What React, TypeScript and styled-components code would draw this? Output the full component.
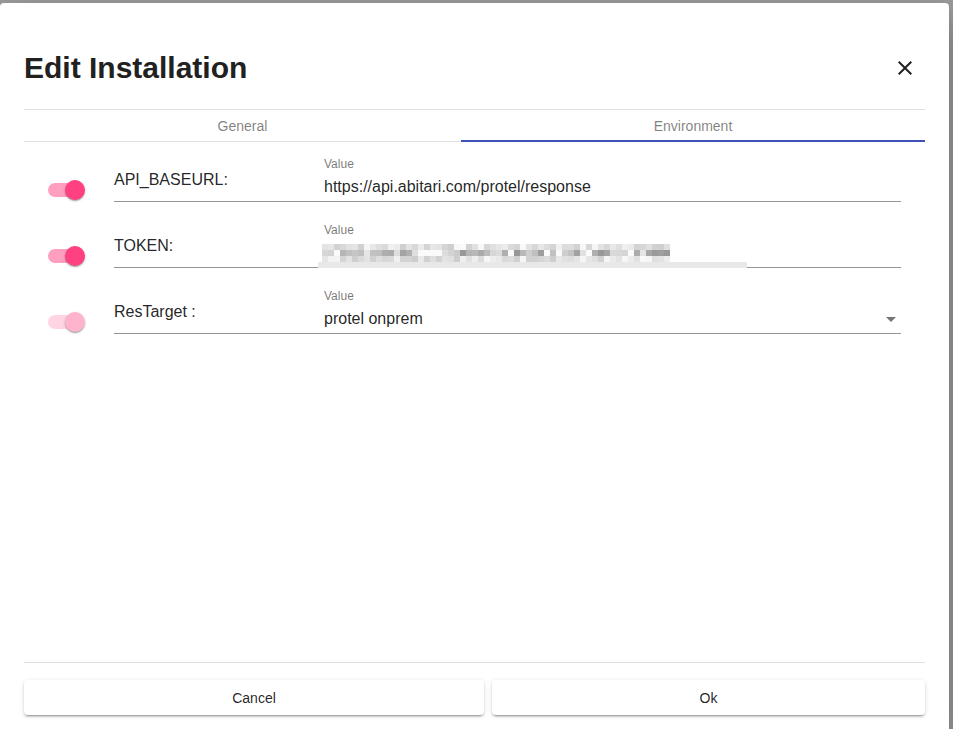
import React from "react";
import styled, { createGlobalStyle } from "styled-components";

const GlobalStyle = createGlobalStyle`
  html, body { margin: 0; padding: 0; }
  body {
    background: #9e9e9e;
    font-family: "Liberation Sans", Arial, sans-serif;
    color: rgba(0,0,0,0.87);
    overflow: hidden;
  }
`;

const Page = styled.div`
  width: 953px;
  height: 729px;
  overflow: hidden;
`;

const Dialog = styled.div`
  margin-top: 3px;
  width: 949px;
  height: 726px;
  background: #fff;
  border-radius: 4px 4px 0 0;
  box-shadow: 0 11px 15px -7px rgba(0,0,0,0.2), 0 24px 38px 3px rgba(0,0,0,0.14), 0 9px 46px 8px rgba(0,0,0,0.12);
  display: flex;
  flex-direction: column;
`;

const Header = styled.div`
  display: flex;
  align-items: center;
  justify-content: space-between;
  padding: 47px 24px 23px 24px;
`;

const Title = styled.h2`
  margin: 0;
  font-size: 30px;
  line-height: 36px;
  font-weight: 700;
  color: #212121;
`;

const CloseButton = styled.button`
  border: none;
  background: transparent;
  padding: 0;
  width: 24px;
  height: 24px;
  margin-right: 8px;
  display: flex;
  align-items: center;
  justify-content: center;
  color: rgba(0,0,0,0.87);
`;

const Tabs = styled.div`
  margin: 0 24px;
  border-top: 1px solid #e0e0e0;
  border-bottom: 1px solid #e0e0e0;
  display: grid;
  grid-template-columns: 437px 1fr;
`;

const Tab = styled.div<{ $active?: boolean }>`
  height: 32px;
  box-sizing: border-box;
  display: flex;
  align-items: center;
  justify-content: center;
  font-size: 14px;
  color: rgba(0,0,0,0.5);
  border-bottom: 2px solid ${(p) => (p.$active ? "#3f51b5" : "transparent")};
  padding-top: 1px;
  margin-bottom: -1px;
`;

const Content = styled.div`
  flex: 1;
  display: flex;
  flex-direction: column;
  gap: 18px;
  padding: 12px 48px 0 48px;
`;

const Row = styled.div`
  height: 48px;
  display: flex;
`;

const SwitchBox = styled.div`
  width: 37px;
  margin-top: 26px;
  margin-right: 29px;
  height: 20px;
  position: relative;
  flex-shrink: 0;
`;

const Track = styled.div<{ $disabled?: boolean }>`
  position: absolute;
  left: 0;
  top: 3px;
  width: 34px;
  height: 14px;
  border-radius: 7px;
  background: #ff4081;
  opacity: ${(p) => (p.$disabled ? 0.22 : 0.5)};
`;

const Thumb = styled.div<{ $disabled?: boolean }>`
  position: absolute;
  left: 17px;
  top: 0;
  width: 20px;
  height: 20px;
  border-radius: 50%;
  background: ${(p) => (p.$disabled ? "#ffb3cd" : "#ff4081")};
  box-shadow: 0 1px 3px rgba(0,0,0,0.2), 0 1px 1px rgba(0,0,0,0.14), 0 2px 1px -1px rgba(0,0,0,0.12);
`;

const NameField = styled.div`
  width: 204px;
  flex-shrink: 0;
  box-sizing: border-box;
  border-bottom: 1px solid rgba(0,0,0,0.42);
  font-size: 16px;
  line-height: 19px;
  padding-top: 16px;
  color: rgba(0,0,0,0.87);
`;

const ValueField = styled.div`
  flex: 1;
  box-sizing: border-box;
  border-bottom: 1px solid rgba(0,0,0,0.42);
  display: flex;
  flex-direction: column;
`;

const ValueLabel = styled.div`
  font-size: 12px;
  line-height: 14px;
  margin-top: 3px;
  padding-left: 6px;
  color: rgba(0,0,0,0.54);
`;

const ValueText = styled.div`
  font-size: 16px;
  line-height: 19px;
  margin-top: 6px;
  padding-left: 6px;
  color: rgba(0,0,0,0.87);
  display: flex;
  justify-content: space-between;
  align-items: center;
  height: 19px;
`;

const Obscured = styled.svg`
  display: block;
  margin-top: 5px;
  margin-bottom: -1px;
`;

const Arrow = styled.svg`
  margin-right: -2px;
  flex-shrink: 0;
`;

const Footer = styled.div`
  margin: 0 24px;
  border-top: 1px solid #e0e0e0;
  padding-top: 17px;
  height: 67px;
  box-sizing: border-box;
  display: grid;
  grid-template-columns: 460px 1fr;
  align-items: start;
  gap: 8px;
`;

const Button = styled.button`
  height: 35px;
  border: none;
  border-radius: 4px;
  background: #fff;
  font-family: "Liberation Sans", Arial, sans-serif;
  font-size: 14px;
  color: rgba(0,0,0,0.87);
  box-shadow: 0 3px 1px -2px rgba(0,0,0,0.2), 0 2px 2px 0 rgba(0,0,0,0.14), 0 1px 5px 0 rgba(0,0,0,0.12);
  cursor: pointer;
`;

function Toggle({ disabled }: { disabled?: boolean }) {
  return (
    <SwitchBox>
      <Track $disabled={disabled} />
      <Thumb $disabled={disabled} />
    </SwitchBox>
  );
}

// deterministic pseudo-random grays for the pixelated token
function blocks() {
  const out: { x: number; y: number; c: string }[] = [];
  let s = 7;
  const rnd = () => {
    s = (s * 9301 + 49297) % 233280;
    return s / 233280;
  };
  const cols = 58;
  for (let r = 0; r < 3; r++) {
    for (let c = 0; c < cols; c++) {
      const v = rnd();
      let g: number;
      if (r === 1) g = Math.round(150 + v * 95);
      else g = Math.round(205 + v * 45);
      if (v > 0.85 && r === 1) g = 250;
      out.push({ x: 2 + c * 6, y: r * 6, c: `rgb(${g},${g},${g})` });
    }
  }
  return out;
}
const BLOCKS = blocks();

export default function App() {
  return (
    <Page>
      <GlobalStyle />
      <Dialog>
        <Header>
          <Title>Edit Installation</Title>
          <CloseButton aria-label="close">
            <svg width="24" height="24" viewBox="0 0 24 24">
              <path
                fill="currentColor"
                d="M19 6.41 17.59 5 12 10.59 6.41 5 5 6.41 10.59 12 5 17.59 6.41 19 12 13.41 17.59 19 19 17.59 13.41 12z"
              />
            </svg>
          </CloseButton>
        </Header>
        <Tabs>
          <Tab>General</Tab>
          <Tab $active>Environment</Tab>
        </Tabs>
        <Content>
          <Row>
            <Toggle />
            <NameField>API_BASEURL:</NameField>
            <ValueField>
              <ValueLabel>Value</ValueLabel>
              <ValueText>https://api.abitari.com/protel/response</ValueText>
            </ValueField>
          </Row>
          <Row>
            <Toggle />
            <NameField>TOKEN:</NameField>
            <ValueField>
              <ValueLabel>Value</ValueLabel>
              <Obscured width="429" height="26" viewBox="0 0 429 26">
                <rect x="0" y="0" width="429" height="26" fill="#fff" />
                <g transform="translate(2,1)">
                  {BLOCKS.map((b, i) => (
                    <rect key={i} x={b.x} y={b.y + 1} width="6" height="6" fill={b.c} />
                  ))}
                </g>
                <rect x="0" y="20" width="429" height="6" fill="#e8e8e8" />
              </Obscured>
            </ValueField>
          </Row>
          <Row>
            <Toggle disabled />
            <NameField>ResTarget :</NameField>
            <ValueField>
              <ValueLabel>Value</ValueLabel>
              <ValueText>
                protel onprem
                <Arrow width="24" height="24" viewBox="0 0 24 24">
                  <path d="M7 10l5 5 5-5z" fill="rgba(0,0,0,0.54)" />
                </Arrow>
              </ValueText>
            </ValueField>
          </Row>
        </Content>
        <Footer>
          <Button>Cancel</Button>
          <Button>Ok</Button>
        </Footer>
      </Dialog>
    </Page>
  );
}
